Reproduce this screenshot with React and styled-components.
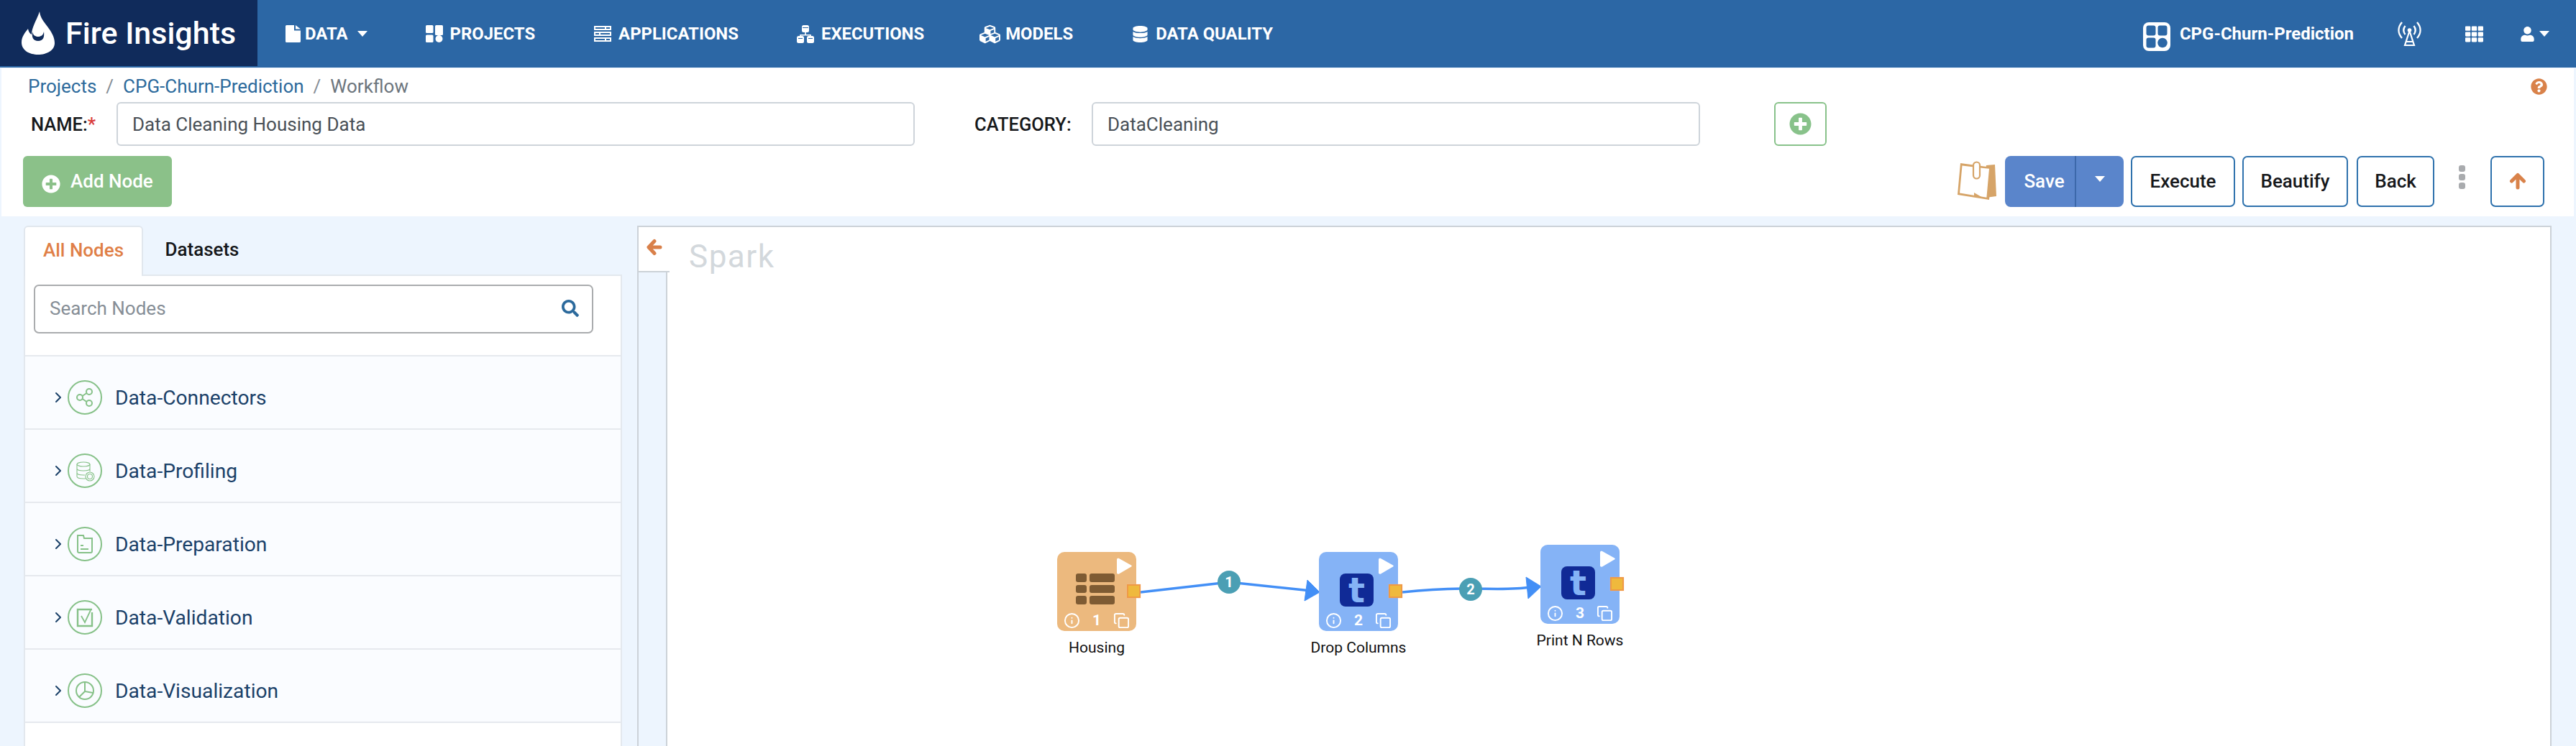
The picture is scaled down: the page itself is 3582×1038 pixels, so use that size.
import React from 'react';
import styled, { createGlobalStyle } from 'styled-components';
import { FaCubes, FaDatabase, FaPlusCircle, FaQuestionCircle, FaSearch, FaTh, FaUser } from 'react-icons/fa';
import { ChevronRight, Copy, Info } from 'lucide-react';

const GlobalStyle = createGlobalStyle`
  html, body { margin: 0; padding: 0; height: 100%; background: #edf5fe; }
  body { font-family: Roboto, "Liberation Sans", sans-serif; overflow: hidden; }
  * { box-sizing: border-box; }
`;

const Page = styled.div`
  height: 1038px;
  overflow: hidden;
  background: #edf5fe;
`;

const Navbar = styled.nav`
  display: flex;
  height: 94px;
  background: #2c67a5;
  color: #fff;
`;

const Brand = styled.div`
  display: flex;
  align-items: center;
  gap: 15px;
  width: 358px;
  height: 92px;
  padding: 0 0 0 30px;
  background: #102b5b;
  font-size: 43px;
  font-weight: 500;
  white-space: nowrap;
`;

const NavMenu = styled.div`
  display: flex;
  align-items: center;
  height: 94px;
  padding: 0 0 0 39px;
  flex: 1;
`;

const NavItem = styled.div`
  display: flex;
  align-items: center;
  gap: ${p => p.$gap || 10}px;
  margin-right: ${p => p.$mr}px;
  font-size: 23.9px;
  font-weight: 700;
  white-space: nowrap;
`;

const Caret = styled.span`
  width: 0;
  height: 0;
  margin-left: ${p => p.$ml || 0}px;
  border-left: 7px solid transparent;
  border-right: 7px solid transparent;
  border-top: 8px solid ${p => p.$color || '#fff'};
`;

const NavRight = styled.div`
  display: flex;
  align-items: center;
  height: 94px;
  padding: 0 37px 0 0;

  > svg:first-child { margin-top: 8px; }
`;

const ProjectName = styled.span`
  margin: 0 60px 0 13px;
  font-size: 24px;
  font-weight: 700;
  white-space: nowrap;
`;

const UserBox = styled.span`
  display: flex;
  align-items: center;
  gap: 6px;
  margin-left: 51px;
`;

const GridBox = styled.span`
  display: flex;
  margin-left: 60px;
`;

const Header = styled.header`
  height: 206px;
  margin: 1px 3px 0 2px;
  background: #fff;
`;

const CrumbRow = styled.div`
  display: flex;
  align-items: center;
  justify-content: space-between;
  height: 47px;
  padding: 3px 37px 0 37px;
  font-size: 26px;
  color: #6c757d;
`;

const Crumbs = styled.div`
  display: flex;
  align-items: center;
`;

const CrumbLink = styled.span`
  color: #2c6a9c;
`;

const CrumbSep = styled.span`
  margin: 0 13px;
  color: #868e96;
`;

const FormRow = styled.div`
  display: flex;
  align-items: center;
  height: 61px;
`;

const FieldLabel = styled.label`
  width: ${p => p.$w}px;
  margin-left: ${p => p.$ml}px;
  font-size: 25.5px;
  font-weight: ${p => p.$weight || 500};
  color: #16181b;
  white-space: nowrap;
`;

const Star = styled.span`
  color: #d93a3a;
`;

const TextBox = styled.div`
  display: flex;
  align-items: center;
  width: ${p => p.$w}px;
  height: 61px;
  padding-left: 20px;
  border: 2px solid #ced4da;
  border-radius: 6px;
  font-size: 26px;
  color: #495057;
`;

const AddFieldButton = styled.button`
  display: flex;
  align-items: center;
  justify-content: center;
  width: 73px;
  height: 61px;
  margin-left: 103px;
  padding: 0;
  background: #fff;
  border: 2px solid #88c28a;
  border-radius: 6px;
  color: #88c28a;
  font-size: 31px;
`;

const ToolRow = styled.div`
  display: flex;
  align-items: stretch;
  justify-content: space-between;
  height: 71px;
  margin-top: 14px;
  padding: 0 41px 0 30px;
`;

const AddNodeButton = styled.button`
  display: flex;
  align-items: center;
  gap: 14px;
  width: 207px;
  padding: 0 0 2px 26px;
  border: 0;
  border-radius: 6px;
  background: #8bc189;
  color: #fff;
  font-family: inherit;
  font-size: 26px;
  font-weight: 500;

  svg { margin-top: 8px; }
`;

const Actions = styled.div`
  display: flex;
  align-items: stretch;
  gap: 10px;
`;

const NoteIcon = styled.svg`
  align-self: center;
  width: 56px;
  height: 54px;
  margin: 0 2px 3px 0;
`;

const SaveGroup = styled.div`
  display: flex;
  width: 165px;
  border-radius: 8px;
  background: #5a85cb;
  color: #fff;
  font-size: 26px;
  font-weight: 500;
`;

const SaveLabel = styled.div`
  display: flex;
  align-items: center;
  justify-content: center;
  width: 99px;
  padding: 0 0 2px 12px;
  border-right: 2px solid #3c68aa;
`;

const SaveCaret = styled.div`
  display: flex;
  flex: 1;
  align-items: center;
  justify-content: center;
  padding-bottom: 8px;
`;

const OutlineButton = styled.button`
  display: flex;
  align-items: center;
  justify-content: center;
  width: ${p => p.$w}px;
  margin-left: ${p => p.$ml || 0}px;
  padding: 0 0 2px;
  background: #fff;
  border: 2px solid #2f72ad;
  border-radius: 7px;
  color: #16181b;
  font-family: inherit;
  font-size: 26px;
  font-weight: 500;
`;

const Kebab = styled.div`
  display: flex;
  flex-direction: column;
  justify-content: center;
  gap: 3px;
  margin: 0 25px 4px 24px;
  padding-bottom: 8px;

  i {
    display: block;
    width: 9px;
    height: 9px;
    border-radius: 3px;
    background: #a9abae;
  }
`;

const Workspace = styled.main`
  display: flex;
  align-items: flex-start;
  padding: 13px 0 0 33px;
`;

const SidePanel = styled.aside`
  width: 832px;
  flex: none;
`;

const Tabs = styled.div`
  display: flex;
  height: 68px;
`;

const Tab = styled.div`
  display: flex;
  align-items: center;
  justify-content: center;
  width: ${p => p.$w}px;
  height: ${p => (p.$active ? 70 : 68)}px;
  padding-bottom: 4px;
  background: ${p => (p.$active ? '#fff' : 'transparent')};
  border: 2px solid ${p => (p.$active ? '#e1e7ee' : 'transparent')};
  border-bottom: 0;
  border-radius: 6px 6px 0 0;
  color: ${p => (p.$active ? '#e07f47' : '#16181b')};
  font-size: 26px;
  font-weight: 500;
  position: relative;
`;

const PanelBody = styled.div`
  height: 660px;
  background: #fff;
  border: 2px solid #e3e8ee;
  border-bottom: 0;
`;

const SearchWrap = styled.div`
  padding: 12px 38px 30px 12px;
  border-bottom: 2px solid #e6e9ee;
`;

const SearchBox = styled.div`
  display: flex;
  align-items: center;
  justify-content: space-between;
  height: 68px;
  padding: 0 18px 2px 20px;
  border: 2px solid #aaacae;
  border-radius: 7px;
  color: #868e96;
  font-size: 26px;

  svg { color: #2c6a9c; }
`;

const GroupRow = styled.div`
  display: flex;
  align-items: center;
  height: 102px;
  padding: 14px 0 0 34px;
  background: #fafcff;
  border-bottom: 2px solid #e6e9ee;
  color: #1b4169;
  font-size: 28.2px;

  > svg:first-child { color: #1b4169; margin-right: 1px; }
`;

const GroupIcon = styled.span`
  display: flex;
  align-items: center;
  justify-content: center;
  width: 48px;
  height: 48px;
  margin-right: 18px;
  border: 2px solid #86c188;
  border-radius: 50%;
`;

const CanvasBox = styled.section`
  position: relative;
  width: 2662px;
  height: 760px;
  margin-left: 21px;
  background: #fff;
  border: 2px solid #ccd2d8;
  border-bottom: 0;
`;

const CanvasRail = styled.div`
  width: 40px;
  height: 100%;
  background: #edf5fe;
  border-right: 2px solid #ccd2d8;
`;

const CollapseTab = styled.div`
  position: absolute;
  top: 0;
  left: 0;
  display: flex;
  align-items: center;
  width: 43px;
  height: 63px;
  padding: 0 0 6px 11px;
  background: #fff;
  border-bottom: 2px solid #ccd2d8;
`;

const EngineTitle = styled.div`
  position: absolute;
  top: 11px;
  left: 70px;
  color: #d3d8dc;
  font-size: 44px;
  line-height: 60px;
  letter-spacing: 1.5px;
`;

const Wires = styled.svg`
  position: absolute;
  inset: 0;
  width: 100%;
  height: 100%;
`;

const WireBadge = styled.div`
  position: absolute;
  left: ${p => p.$x - 16}px;
  top: ${p => p.$y - 16}px;
  display: flex;
  align-items: center;
  justify-content: center;
  width: 32px;
  height: 32px;
  border-radius: 50%;
  background: #4b9fb4;
  color: #fff;
  font-size: 20px;
  font-weight: 700;
`;

const NodeCard = styled.div`
  position: absolute;
  left: ${p => p.$x}px;
  top: ${p => p.$y}px;
  width: 110px;
  height: 110px;
  border-radius: 10px;
  background: ${p => p.$color};
  color: #fff;
`;

const NodePlay = styled.svg`
  position: absolute;
  top: 7px;
  right: 4px;
  width: 23px;
  height: 25px;
`;

const NodeFooter = styled.div`
  position: absolute;
  left: 9px;
  right: 9px;
  bottom: 3px;
  display: flex;
  align-items: center;
  justify-content: space-between;
  font-size: 21px;
  font-weight: 700;
`;

const NodePort = styled.div`
  position: absolute;
  right: -6px;
  top: 45px;
  width: 19px;
  height: 19px;
  background: #efb93d;
  border: 2px solid #ef9a45;
  box-shadow: 0 0 1px #f6b7a0;
`;

const TableGlyph = styled.div`
  position: absolute;
  left: 26px;
  top: 30px;
  display: grid;
  grid-template-columns: 15px 35px;
  grid-auto-rows: 11.5px;
  gap: 4px;

  i {
    display: block;
    border-radius: 3px;
    background: #7e5b33;
  }
`;

const TumblrGlyph = styled.div`
  position: absolute;
  left: 29px;
  top: 30px;
  display: flex;
  align-items: center;
  justify-content: center;
  width: 47px;
  height: 46px;
  border-radius: 8px;
  background: #102a96;
  color: #85b3f6;
  font-family: "DejaVu Sans", sans-serif;
  font-size: 48px;
  font-weight: 700;
  line-height: 46px;
`;

const NodeName = styled.div`
  position: absolute;
  left: ${p => p.$x}px;
  top: ${p => p.$y}px;
  width: 200px;
  transform: translateX(-100px);
  text-align: center;
  color: #111;
  font-size: 21px;
  white-space: nowrap;
`;

const Flame = () => (
  <svg width="46" height="60" viewBox="0 0 46 60" fill="#fff">
    <path fillRule="evenodd" d="M25 0C26 9 31 14 36 21C42 29 46 36 46 44C46 54 35 60 23 60C11 60 0 54 0 43C0 35 5 29 9 24C10 29 12 31 14 32C14 22 21 12 25 0ZM15 28C14 36 16 41 23 41C30 41 32 36 31 28C30 33 27 35 23 35C19 35 16 33 15 28Z" />
  </svg>
);

const FileIcon = () => (
  <svg width="21" height="24" viewBox="0 0 21 24" fill="#fff">
    <path d="M1.500 0H12v7.500h9V22.500A1.500 1.500 0 0 1 19.500 24h-18A1.500 1.500 0 0 1 0 22.500V1.500A1.500 1.500 0 0 1 1.500 0zM14 0l7 5.500h-7z" />
  </svg>
);

const ProjectsIcon = () => (
  <svg width="24" height="24" viewBox="0 0 24 24" fill="#fff">
    <rect x="0" y="0" width="10.500" height="11" rx="1.500" />
    <rect x="13" y="0" width="11" height="14" rx="1.500" />
    <rect x="0" y="13.500" width="10.500" height="10.500" rx="1.500" />
    <circle cx="18.500" cy="19" r="5" />
  </svg>
);

const AppsIcon = () => (
  <svg width="24" height="24" viewBox="0 0 24 24" fill="#fff">
    <path fillRule="evenodd" d="M0 1h24v6H0zM2 3v2h13V3zM17 3v2h5V3z" />
    <path fillRule="evenodd" d="M0 9h24v6H0zM2 11v2h5v-2zM9 11v2h13v-2z" />
    <path fillRule="evenodd" d="M0 17h24v6H0zM2 19v2h13v-2zM17 19v2h5v-2z" />
  </svg>
);

const ExecIcon = () => (
  <svg width="24" height="25" viewBox="0 0 24 25" fill="#fff">
    <rect x="7" y="0" width="10" height="10" rx="2.500" />
    <path d="M11.200 10h1.600v3h7v2h-1.600v-.4H5.800v.4H4.200v-2h7z" />
    <rect x="0" y="15" width="10" height="10" rx="2.500" />
    <rect x="14" y="15" width="10" height="10" rx="2.500" />
    <path d="M9 3h-1v1h8V3zM2 18h6v1H2zM16 18h6v1h-6z" fill="#2c67a5" />
  </svg>
);

const ProjectBadge = () => (
  <svg width="38" height="40" viewBox="0 0 38 40">
    <rect x="0" y="0" width="38" height="40" rx="8" fill="#fff" />
    <g fill="#2c67a5">
      <rect x="4.500" y="4.500" width="13" height="14" rx="3" />
      <rect x="20.500" y="4.500" width="13" height="14" rx="3" />
      <rect x="4.500" y="21.500" width="13" height="14" rx="3" />
      <circle cx="27" cy="28.500" r="6.800" />
    </g>
  </svg>
);

const TowerIcon = () => (
  <svg width="35" height="36" viewBox="0 0 35 36" fill="none" stroke="#fff" strokeWidth="2.400">
    <path d="M7 2C1 9 1 17 7 24M28 2c6 7 6 15 0 22M11.500 7c-3 4-3 8 0 12M23.500 7c3 4 3 8 0 12" />
    <circle cx="17.500" cy="13" r="2.800" fill="#fff" stroke="none" />
    <path d="M17.500 14L11 34h13zM13 29h9" strokeWidth="2.200" />
  </svg>
);

const BackArrow = () => (
  <svg width="22" height="24" viewBox="0 0 22 24" fill="none" stroke="#d9804a" strokeWidth="5" strokeLinecap="round" strokeLinejoin="round">
    <path d="M19 12H4M11 3.500L3 12l8 8.500" />
  </svg>
);

const UpArrow = () => (
  <svg width="24" height="24" viewBox="0 0 24 24" fill="none" stroke="#d9824a" strokeWidth="5" strokeLinecap="round" strokeLinejoin="round">
    <path d="M12 21V5M3.500 12L12 3.500l8.500 8.500" />
  </svg>
);

const Note = () => (
  <NoteIcon viewBox="0 0 56 54">
    <path d="M42 6l12-1 2 44-22 3z" fill="#d6a468" />
    <path d="M6 3l44 6-4 45-44-7z" fill="#d6a468" />
    <path d="M8.500 6.500L38 10l8 .8-3.600 40L5 44.500z" fill="#fff" />
    <path d="M25 44v6l12 1-12-7z" fill="#d6a468" />
    <path d="M24 15v-9a4 4 0 0 1 9 0v14a4.500 4.500 0 0 1-9 0v-5" fill="#fff" stroke="#d6a468" strokeWidth="2.200" />
  </NoteIcon>
);

const NodePlayIcon = () => (
  <NodePlay viewBox="0 0 23 25">
    <path d="M3 2l17 9.500c1 .6 1 1.400 0 2L3 23.500c-1.500.5-3 0-3-1.500V3.500C0 2 1.500 1.500 3 2z" fill="#fff" />
  </NodePlay>
);

const GroupGlyph = ({ kind }) => {
  const common = { width: 30, height: 30, viewBox: '0 0 30 30', fill: 'none', stroke: '#86c188', strokeWidth: 2 };
  if (kind === 'share') {
    return (
      <svg {...common}>
        <circle cx="21" cy="7" r="4" />
        <circle cx="8" cy="15" r="4" />
        <circle cx="21" cy="23" r="4" />
        <path d="M11.500 13l6-4M11.500 17l6 4" />
      </svg>
    );
  }
  if (kind === 'profile') {
    return (
      <svg {...common} strokeWidth="1.100">
        <ellipse cx="13" cy="6" rx="9" ry="3" />
        <path d="M4 6v17c0 2 4 3 9 3h3M22 6v10M4 12c0 2 4 3 9 3s9-1 9-3M4 18c0 2 4 3 9 3h2" />
        <circle cx="22" cy="23" r="6" />
        <circle cx="22" cy="23" r="3.500" />
      </svg>
    );
  }
  if (kind === 'folder') {
    return (
      <svg {...common}>
        <path d="M5 3h8l1 4h11v18a2 2 0 0 1-2 2H7a2 2 0 0 1-2-2z" />
        <path d="M9 17h4M9 22h11" />
      </svg>
    );
  }
  if (kind === 'check') {
    return (
      <svg {...common} strokeWidth="2.400">
        <path d="M25 4H5v23h20V8" />
        <path d="M10 13l5 9 8-17" strokeWidth="1.800" />
      </svg>
    );
  }
  return (
    <svg {...common}>
      <circle cx="15" cy="15" r="12" />
      <path d="M15 3v13l11 2M15 16l-8 8" />
    </svg>
  );
};

const navItems = [
  { label: 'DATA', icon: <FileIcon />, mr: 81, caret: true, gap: 6 },
  { label: 'PROJECTS', icon: <ProjectsIcon />, mr: 82 },
  { label: 'APPLICATIONS', icon: <AppsIcon />, mr: 81 },
  { label: 'EXECUTIONS', icon: <ExecIcon />, mr: 77 },
  { label: 'MODELS', icon: <FaCubes size={29} />, mr: 82, gap: 7 },
  { label: 'DATA QUALITY', icon: <FaDatabase size={23} />, mr: 0 },
];

const groups = [
  { label: 'Data-Connectors', kind: 'share' },
  { label: 'Data-Profiling', kind: 'profile' },
  { label: 'Data-Preparation', kind: 'folder' },
  { label: 'Data-Validation', kind: 'check' },
  { label: 'Data-Visualization', kind: 'pie' },
];

const nodes = [
  { id: 1, name: 'Housing', x: 582, y: 452, color: '#ecb97e', glyph: 'table', labelX: 637 },
  { id: 2, name: 'Drop Columns', x: 946, y: 452, color: '#85b3f6', glyph: 'tumblr', labelX: 1001 },
  { id: 3, name: 'Print N Rows', x: 1254, y: 442, color: '#85b3f6', glyph: 'tumblr', labelX: 1309 },
];

const WorkflowNode = ({ node }) => (
  <>
    <NodeCard $x={node.x} $y={node.y} $color={node.color}>
      <NodePlayIcon />
      {node.glyph === 'table' ? (
        <TableGlyph>
          {[0, 1, 2, 3, 4, 5].map(i => <i key={i} />)}
        </TableGlyph>
      ) : (
        <TumblrGlyph>t</TumblrGlyph>
      )}
      <NodeFooter>
        <Info size={23} strokeWidth={2} />
        <span>{node.id}</span>
        <Copy size={23} strokeWidth={2} />
      </NodeFooter>
      <NodePort />
    </NodeCard>
    <NodeName $x={node.labelX} $y={node.y + 121}>{node.name}</NodeName>
  </>
);

export default function App() {
  return (
    <Page>
      <GlobalStyle />
      <Navbar>
        <Brand>
          <Flame />
          <span>Fire Insights</span>
        </Brand>
        <NavMenu>
          {navItems.map(item => (
            <NavItem key={item.label} $mr={item.mr} $gap={item.gap}>
              {item.icon}
              <span>{item.label}</span>
              {item.caret && <Caret $ml={7} />}
            </NavItem>
          ))}
        </NavMenu>
        <NavRight>
          <ProjectBadge />
          <ProjectName>CPG-Churn-Prediction</ProjectName>
          <TowerIcon />
          <GridBox><FaTh size={25} /></GridBox>
          <UserBox><FaUser size={21} /><Caret /></UserBox>
        </NavRight>
      </Navbar>

      <Header>
        <CrumbRow>
          <Crumbs>
            <CrumbLink>Projects</CrumbLink>
            <CrumbSep>/</CrumbSep>
            <CrumbLink>CPG-Churn-Prediction</CrumbLink>
            <CrumbSep>/</CrumbSep>
            <span>Workflow</span>
          </Crumbs>
          <FaQuestionCircle size={23} color="#d9824a" />
        </CrumbRow>
        <FormRow>
          <FieldLabel $w={119} $ml={41}>NAME:<Star>*</Star></FieldLabel>
          <TextBox $w={1110}>Data Cleaning Housing Data</TextBox>
          <FieldLabel $w={163} $ml={83}>CATEGORY:</FieldLabel>
          <TextBox $w={846}>DataCleaning</TextBox>
          <AddFieldButton><FaPlusCircle /></AddFieldButton>
        </FormRow>
        <ToolRow>
          <AddNodeButton>
            <FaPlusCircle size={26} />
            <span>Add Node</span>
          </AddNodeButton>
          <Actions>
            <Note />
            <SaveGroup>
              <SaveLabel>Save</SaveLabel>
              <SaveCaret><Caret /></SaveCaret>
            </SaveGroup>
            <OutlineButton $w={145}>Execute</OutlineButton>
            <OutlineButton $w={147}>Beautify</OutlineButton>
            <OutlineButton $w={108} $ml={2}>Back</OutlineButton>
            <Kebab><i /><i /><i /></Kebab>
            <OutlineButton $w={75}><UpArrow /></OutlineButton>
          </Actions>
        </ToolRow>
      </Header>

      <Workspace>
        <SidePanel>
          <Tabs>
            <Tab $w={166} $active>All Nodes</Tab>
            <Tab $w={164}>Datasets</Tab>
          </Tabs>
          <PanelBody>
            <SearchWrap>
              <SearchBox>
                <span>Search Nodes</span>
                <FaSearch size={24} />
              </SearchBox>
            </SearchWrap>
            {groups.map(group => (
              <GroupRow key={group.label}>
                <ChevronRight size={24} strokeWidth={2} />
                <GroupIcon><GroupGlyph kind={group.kind} /></GroupIcon>
                <span>{group.label}</span>
              </GroupRow>
            ))}
          </PanelBody>
        </SidePanel>

        <CanvasBox>
          <CanvasRail />
          <CollapseTab><BackArrow /></CollapseTab>
          <EngineTitle>Spark</EngineTitle>
          <Wires>
            <g fill="none" stroke="#438ff6" strokeWidth="3.500">
              <path d="M698 508L821 494L935 506" />
              <path d="M1062 508C1100 504 1130 503 1157 503S1215 505 1240 501" />
            </g>
            <g fill="#438ff6" stroke="#438ff6" strokeWidth="1" strokeLinejoin="round">
              <path d="M930 491L947 508L926 520z" />
              <path d="M1234 487L1255 500L1237 517z" />
            </g>
          </Wires>
          <WireBadge $x={821} $y={494}>1</WireBadge>
          <WireBadge $x={1157} $y={504}>2</WireBadge>
          {nodes.map(node => <WorkflowNode key={node.id} node={node} />)}
        </CanvasBox>
      </Workspace>
    </Page>
  );
}
